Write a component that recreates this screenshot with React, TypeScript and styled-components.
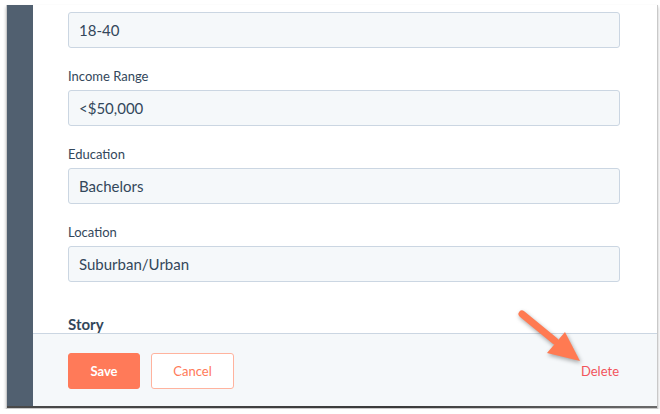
import React from 'react';
import styled, { createGlobalStyle } from 'styled-components';

const GlobalStyle = createGlobalStyle`
  html, body {
    margin: 0;
    padding: 0;
    background: #ffffff;
  }
  body {
    font-family: Lato, "Open Sans", "Liberation Sans", sans-serif;
    color: #33475b;
  }
`;

const Frame = styled.div`
  position: relative;
  margin: 5px 0 0 6px;
  width: 650px;
  border: 1px solid #c9c9c9;
  border-top: none;
  box-shadow: 0 2px 3px rgba(0, 0, 0, 0.25);
  display: flex;
  flex-direction: column;
`;

const Body = styled.div`
  display: flex;
  height: 401px;
`;

const Sidebar = styled.div`
  width: 26px;
  flex-shrink: 0;
  background: #516070;
`;

const Main = styled.div`
  flex: 1;
  display: flex;
  flex-direction: column;
  min-width: 0;
`;

const Scroll = styled.div`
  height: 328px;
  overflow: hidden;
  padding: 7px 37px 0 35px;
  box-sizing: border-box;
`;

const Field = styled.div`
  margin-bottom: 18px;
`;

const Label = styled.div`
  font-size: 13px;
  line-height: 20px;
  margin-bottom: 4px;
  color: #33475b;
`;

const Input = styled.div`
  height: 36px;
  box-sizing: border-box;
  border: 1px solid #cbd6e2;
  border-radius: 3px;
  background: #f5f8fa;
  padding: 0 10px;
  display: flex;
  align-items: center;
  font-size: 15px;
  color: #33475b;
`;

const Section = styled.div`
  margin-top: 32px;
  font-size: 15px;
  font-weight: 700;
  line-height: 20px;
  color: #33475b;
`;

const Footer = styled.div`
  height: 73px;
  box-sizing: border-box;
  border-top: 1px solid #cbd6e2;
  background: #f5f8fa;
  padding: 19px 38px 0 35px;
  display: flex;
  align-items: flex-start;
  gap: 11px;
`;

const Button = styled.button<{ $primary?: boolean }>`
  height: 36px;
  box-sizing: border-box;
  border-radius: 3px;
  font-family: inherit;
  font-size: 13px;
  font-weight: ${(p) => (p.$primary ? 700 : 400)};
  padding: 0;
  width: ${(p) => (p.$primary ? '72px' : '83px')};
  border: 1px solid ${(p) => (p.$primary ? '#ff7a59' : '#ffb39e')};
  background: ${(p) => (p.$primary ? '#ff7a59' : '#ffffff')};
  color: ${(p) => (p.$primary ? '#ffffff' : '#ff7a59')};
`;

const DeleteLink = styled.span`
  margin-left: auto;
  line-height: 36px;
  font-size: 13px;
  color: #f2545b;
`;

const BottomEdge = styled.div`
  height: 2px;
  background: linear-gradient(90deg, #4a4a4a, #3a3a3a 60%, #6a6a6a);
`;

const Pointer = styled.svg`
  position: absolute;
  left: 498px;
  top: 297px;
  overflow: visible;
  filter: drop-shadow(1px 2px 2px rgba(0, 0, 0, 0.35));
`;

const fields = [
  { value: '18-40' },
  { label: 'Income Range', value: '<$50,000' },
  { label: 'Education', value: 'Bachelors' },
  { label: 'Location', value: 'Suburban/Urban' },
];

const App = () => (
  <>
    <GlobalStyle />
    <Frame>
      <Body>
        <Sidebar />
        <Main>
          <Scroll>
            {fields.map((f) => (
              <Field key={f.value}>
                {f.label && <Label>{f.label}</Label>}
                <Input>{f.value}</Input>
              </Field>
            ))}
            <Section>Story</Section>
          </Scroll>
          <Footer>
            <Button $primary>Save</Button>
            <Button>Cancel</Button>
            <DeleteLink>Delete</DeleteLink>
          </Footer>
        </Main>
      </Body>
      <BottomEdge />
      <Pointer width="80" height="70" viewBox="0 0 80 70">
        <line x1="17" y1="12" x2="50" y2="39" stroke="#ff7a52" strokeWidth="7" strokeLinecap="round" />
        <polygon points="42,51 60,30 75,59" fill="#ff7a52" />
      </Pointer>
    </Frame>
  </>
);

export default App;
